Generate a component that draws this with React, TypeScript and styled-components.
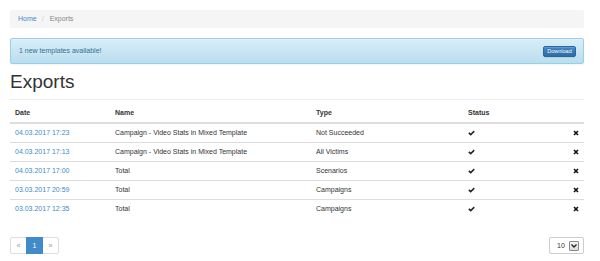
import React from 'react';
import styled, { createGlobalStyle } from 'styled-components';

const GlobalStyle = createGlobalStyle`
  html, body {
    margin: 0;
    padding: 0;
    background: #fff;
  }
  body {
    font-family: "Liberation Sans", Arial, sans-serif;
    font-size: 7px;
    line-height: 10px;
    color: #333;
  }
`;

const Page = styled.div`
  width: 574px;
  padding: 10px;
`;

const Breadcrumb = styled.ol`
  display: flex;
  align-items: center;
  height: 18px;
  margin: 0 0 10px;
  padding: 0 8px;
  list-style: none;
  background: #f5f5f5;
  border-radius: 2px;
`;

const Crumb = styled.li<{ $active?: boolean }>`
  color: ${({ $active }) => ($active ? '#888' : '#428bca')};
`;

const Slash = styled.span`
  margin: 0 6px 0 5px;
  color: #ccc;
`;

const Alert = styled.div`
  box-sizing: border-box;
  display: flex;
  align-items: center;
  justify-content: space-between;
  height: 26px;
  padding: 0 7px 0 8px;
  color: #31708f;
  background: linear-gradient(to bottom, #d9edf7 0%, #b9def0 100%);
  border: 1px solid #9acfea;
  border-radius: 2px;
  box-shadow: inset 0 1px 0 rgba(255, 255, 255, 0.25), 0 1px 2px rgba(0, 0, 0, 0.05);
  text-shadow: 0 1px 0 rgba(255, 255, 255, 0.2);
`;

const Button = styled.button`
  box-sizing: border-box;
  height: 11px;
  width: 33px;
  padding: 0;
  font-family: inherit;
  font-size: 5.5px;
  line-height: 9px;
  color: #fff;
  background: linear-gradient(to bottom, #428bca 0%, #2d6ca2 100%);
  border: 1px solid #2b669a;
  border-radius: 2px;
  text-shadow: 0 -1px 0 rgba(0, 0, 0, 0.2);
  box-shadow: inset 0 1px 0 rgba(255, 255, 255, 0.15), 0 1px 1px rgba(0, 0, 0, 0.075);
`;

const PageHeader = styled.div`
  margin-top: 7px;
  padding-bottom: 6px;
  border-bottom: 1px solid #eee;
`;

const Title = styled.h1`
  margin: 0;
  font-size: 19px;
  line-height: 22px;
  font-weight: 400;
  color: #333;
`;

const Table = styled.table`
  width: 574px;
  margin-top: 4px;
  border-collapse: collapse;
  table-layout: fixed;

  th {
    padding: 4px 5px;
    text-align: left;
    font-weight: 700;
    border-bottom: 2px solid #ddd;
  }

  td {
    padding: 4px 5px;
    border-top: 1px solid #ddd;
    vertical-align: middle;
  }
`;

const DateLink = styled.a`
  color: #428bca;
  text-decoration: none;
`;

const Action = styled.td`
  text-align: right;
`;

const Icon = styled.svg`
  display: inline-block;
  vertical-align: middle;
`;

const Footer = styled.div`
  display: flex;
  justify-content: space-between;
  align-items: center;
  margin-top: 19px;
`;

const Pagination = styled.ul`
  display: flex;
  margin: 0;
  padding: 0;
  list-style: none;
`;

const PageItem = styled.li<{ $active?: boolean }>`
  box-sizing: border-box;
  width: 17px;
  height: 17px;
  margin-left: -1px;
  display: flex;
  align-items: center;
  justify-content: center;
  color: ${({ $active }) => ($active ? '#fff' : '#999')};
  background: ${({ $active }) => ($active ? '#428bca' : '#fff')};
  border: 1px solid ${({ $active }) => ($active ? '#428bca' : '#ddd')};
  z-index: ${({ $active }) => ($active ? 1 : 0)};

  &:first-child {
    margin-left: 0;
    border-radius: 2px 0 0 2px;
  }
  &:last-child {
    border-radius: 0 2px 2px 0;
  }
`;

const PerPage = styled.div`
  box-sizing: border-box;
  display: flex;
  align-items: center;
  width: 35px;
  height: 17px;
  padding: 0 4px 0 7px;
  border: 1px solid #ccc;
  border-radius: 2px;
  gap: 4px;
`;

const Arrow = styled.span`
  box-sizing: border-box;
  display: flex;
  align-items: center;
  justify-content: center;
  width: 10px;
  height: 10px;
  margin-left: auto;
  border: 1px solid #888;
  border-radius: 1px;
  background: linear-gradient(to bottom, #f4f4f4, #dcdcdc);
`;

const Check = () => (
  <Icon width="7" height="6" viewBox="0 0 14 12">
    <path d="M0.5 7 L3 4.5 L5.5 7 L11.5 1 L13.5 3.5 L5.5 11.5 Z" fill="#222" />
  </Icon>
);

const Remove = () => (
  <Icon width="6" height="6" viewBox="0 0 12 12">
    <path d="M2 2 L10 10 M10 2 L2 10" stroke="#111" strokeWidth={3.2} />
  </Icon>
);

const rows = [
  { date: '04.03.2017 17:23', name: 'Campaign - Video Stats in Mixed Template', type: 'Not Succeeded' },
  { date: '04.03.2017 17:13', name: 'Campaign - Video Stats in Mixed Template', type: 'All Victims' },
  { date: '04.03.2017 17:00', name: 'Total', type: 'Scenarios' },
  { date: '03.03.2017 20:59', name: 'Total', type: 'Campaigns' },
  { date: '03.03.2017 12:35', name: 'Total', type: 'Campaigns' },
];

const App: React.FC = () => {
  return (
    <>
      <GlobalStyle />
      <Page>
        <Breadcrumb>
          <Crumb>Home</Crumb>
          <Slash>/</Slash>
          <Crumb $active>Exports</Crumb>
        </Breadcrumb>

        <Alert>
          <span>1 new templates available!</span>
          <Button>Download</Button>
        </Alert>

        <PageHeader>
          <Title>Exports</Title>
        </PageHeader>

        <Table>
          <colgroup>
            <col style={{ width: 100 }} />
            <col style={{ width: 201 }} />
            <col style={{ width: 152 }} />
            <col style={{ width: 78 }} />
            <col style={{ width: 43 }} />
          </colgroup>
          <thead>
            <tr>
              <th>Date</th>
              <th>Name</th>
              <th>Type</th>
              <th>Status</th>
              <th></th>
            </tr>
          </thead>
          <tbody>
            {rows.map((r, i) => (
              <tr key={i}>
                <td>
                  <DateLink href="#">{r.date}</DateLink>
                </td>
                <td>{r.name}</td>
                <td>{r.type}</td>
                <td>
                  <Check />
                </td>
                <Action>
                  <Remove />
                </Action>
              </tr>
            ))}
          </tbody>
        </Table>

        <Footer>
          <Pagination>
            <PageItem>«</PageItem>
            <PageItem $active>1</PageItem>
            <PageItem>»</PageItem>
          </Pagination>
          <PerPage>
            <span>10</span>
            <Arrow>
              <svg width="6" height="4" viewBox="0 0 6 4">
                <path d="M0.5 0.5 L3 3 L5.5 0.5" stroke="#222" strokeWidth={1.3} fill="none" />
              </svg>
            </Arrow>
          </PerPage>
        </Footer>
      </Page>
    </>
  );
};

export default App;
